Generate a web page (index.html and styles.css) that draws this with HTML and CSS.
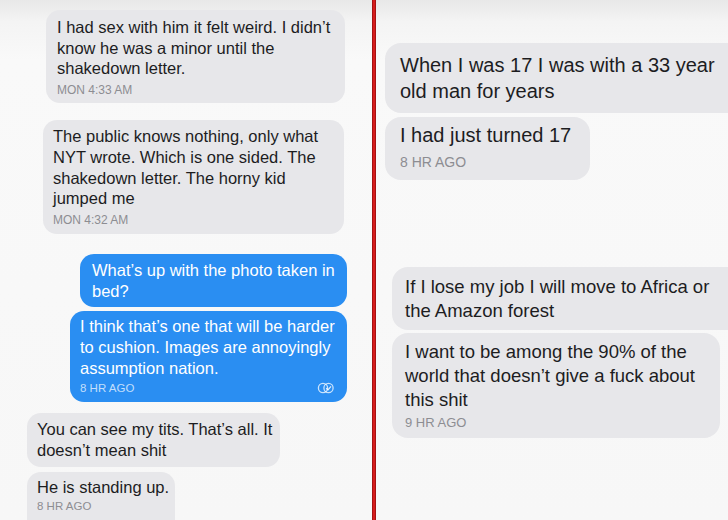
FILE: index.html
```html
<!DOCTYPE html>
<html lang="en">

<head>
    <meta charset="UTF-8">
    <meta name="viewport" content="width=device-width, initial-scale=1.0">
    <title>Messages</title>
    <link rel="stylesheet" href="styles.css">
</head>

<body>
    <div class="screens">
        <div class="panel panel-left">
            <div class="bubble in b1">
                <p>I had sex with him it felt weird. I didn’t<br>know he was a minor until the<br>shakedown letter.</p>
                <div class="stamp">MON 4:33 AM</div>
            </div>
            <div class="bubble in b2">
                <p>The public knows nothing, only what<br>NYT wrote. Which is one sided. The<br>shakedown letter. The horny kid<br>jumped me</p>
                <div class="stamp">MON 4:32 AM</div>
            </div>
            <div class="bubble out b3">
                <p>What’s up with the photo taken in<br>bed?</p>
            </div>
            <div class="bubble out b4">
                <p>I think that’s one that will be harder<br>to cushion. Images are annoyingly<br>assumption nation.</p>
                <div class="stamp">
                    <span>8 HR AGO</span>
                    <svg class="seen" width="18" height="12" viewBox="0 0 18 12">
                        <circle cx="6" cy="6" r="4.6" fill="none" stroke="rgba(255,255,255,0.75)" stroke-width="1.3" />
                        <circle cx="11.5" cy="6" r="4.6" fill="none" stroke="rgba(255,255,255,0.75)" stroke-width="1.3" />
                        <path d="M9.2 6.2 L11 7.9 L14 4.3" fill="none" stroke="rgba(255,255,255,0.85)" stroke-width="1.3" />
                    </svg>
                </div>
            </div>
            <div class="bubble in b5">
                <p>You can see my tits. That’s all. It<br>doesn’t mean shit</p>
            </div>
            <div class="bubble in b6">
                <p>He is standing up.</p>
                <div class="stamp">8 HR AGO</div>
            </div>
        </div>

        <div class="divider"></div>

        <div class="panel panel-right">
            <div class="bubble in r1">
                <p>When I was 17 I was with a 33 year<br>old man for years</p>
            </div>
            <div class="bubble in r2">
                <p>I had just turned 17</p>
                <div class="stamp">8 HR AGO</div>
            </div>
            <div class="bubble in r3">
                <p>If I lose my job I will move to Africa or<br>the Amazon forest</p>
            </div>
            <div class="bubble in r4">
                <p>I want to be among the 90% of the<br>world that doesn’t give a fuck about<br>this shit</p>
                <div class="stamp">9 HR AGO</div>
            </div>
        </div>
    </div>
</body>

</html>
```

FILE: styles.css
```css
* {
    margin: 0;
    padding: 0;
    box-sizing: border-box;
}

body {
    font-family: 'Liberation Sans', Arial, sans-serif;
    width: 728px;
    height: 520px;
    overflow: hidden;
    background: #f8f8f8;
    color: #1d1d1f;
}

.screens {
    display: flex;
    height: 520px;
}

.panel {
    display: flex;
    flex-direction: column;
    align-items: flex-start;
    overflow: hidden;
    background: linear-gradient(#e8e8e8 0, #f4f4f4 22px, #f9f9f9 60px, #f7f7f7);
}

.panel-left {
    width: 372px;
}

.panel-right {
    flex: 1;
    padding-top: 43px;
}

.divider {
    width: 4px;
    background: #d61d1d;
    border-left: 1px solid #a51212;
    border-right: 1px solid #a51212;
}

/* bubbles */
.bubble {
    border-radius: 14px;
    white-space: nowrap;
}

.bubble.in {
    background: #e7e7ea;
}

.bubble.out {
    background: #2a8ef2;
    color: #fff;
}

.panel-left .bubble p {
    font-size: 16.5px;
    line-height: 20.7px;
}

.panel-right .bubble p {
    font-size: 20px;
    line-height: 26px;
}

.stamp {
    font-size: 12px;
    line-height: 16px;
    color: #8d8d92;
    margin-top: 3px;
}

.bubble.out .stamp {
    display: flex;
    justify-content: space-between;
    align-items: center;
    color: rgba(255, 255, 255, 0.72);
    font-size: 11.5px;
    margin-top: 2px;
}

.seen {
    margin-right: -2px;
}

/* left screen */
.b1 {
    margin: 10px 0 0 46px;
    width: 299px;
    padding: 7px 11px 5px;
}

.b2 {
    margin: 17px 0 0 43px;
    width: 301px;
    padding: 6px 10px 6px;
}

.b3 {
    margin: 20px 0 0 80px;
    width: 267px;
    padding: 6px 12px 6px;
}

.b4 {
    margin: 4px 0 0 70px;
    width: 277px;
    padding: 5px 14px 6px 10px;
}

.b5 {
    margin: 11px 0 0 27px;
    width: 253px;
    padding: 6px 10px 6px;
}

.b6 {
    margin: 5px 0 0 27px;
    width: 148px;
    padding: 5px 10px 8px;
    border-bottom-left-radius: 0;
    border-bottom-right-radius: 0;
}

.b6 .stamp {
    font-size: 11.5px;
    margin-top: 0;
}

/* right screen */
.r1 {
    margin-left: 9px;
    width: 352px;
    padding: 9px 15px 9px;
    border-radius: 16px 0 0 16px;
}

.r2 {
    margin: 4px 0 0 9px;
    width: 205px;
    padding: 5px 15px 9px;
    border-radius: 16px;
}

.r2 .stamp,
.r4 .stamp {
    font-size: 14px;
    line-height: 18px;
    margin-top: 5px;
}

.r3 {
    margin: 87px 0 0 16px;
    width: 336px;
    padding: 8px 13px 7px;
    border-radius: 16px 0 0 16px;
}

.panel-right .r3 p,
.panel-right .r4 p {
    font-size: 18.5px;
    line-height: 24px;
}

.r4 {
    margin: 3px 0 0 16px;
    width: 328px;
    padding: 7px 13px 6px;
    border-radius: 16px;
}

.r4 .stamp {
    font-size: 13px;
    margin-top: 2px;
}
```
